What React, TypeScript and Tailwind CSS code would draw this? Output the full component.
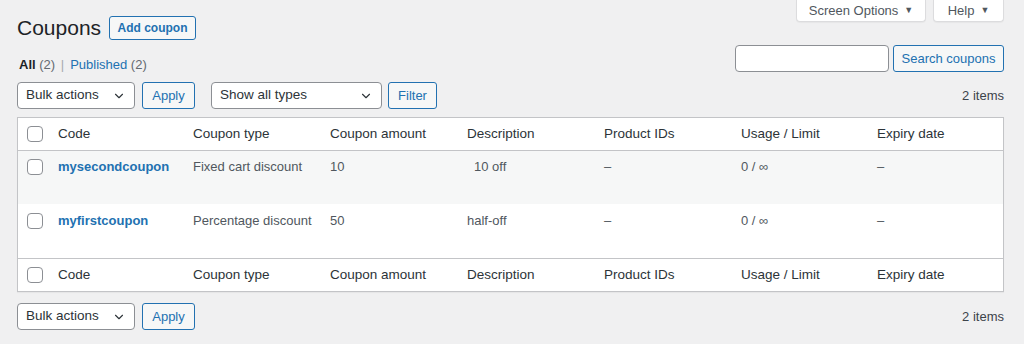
import React from "react";

const font = { fontFamily: "'Liberation Sans', Arial, sans-serif" };

function Chevron() {
  return (
    <svg width="14" height="14" viewBox="0 0 20 20" className="shrink-0">
      <path d="M5 7.5l5 5 5-5" fill="none" stroke="#2c3338" strokeWidth="1.6" strokeLinecap="round" strokeLinejoin="round" />
    </svg>
  );
}

function Select({ label, w }: { label: string; w: string }) {
  return (
    <div className={`${w} h-[27px] bg-white border border-[#8c8f94] rounded-[4px] flex items-center justify-between pl-[8px] pr-[8px] text-[13.5px] text-[#2c3338]`}>
      <span>{label}</span>
      <Chevron />
    </div>
  );
}

function Btn({ label, w }: { label: string; w: string }) {
  return (
    <div className={`${w} h-[27px] bg-[#f6f7f7] border border-[#2271b1] rounded-[3px] flex items-center justify-center text-[13px] text-[#2271b1]`}>
      {label}
    </div>
  );
}

function Check() {
  return <div className="w-[16px] h-[16px] bg-white border border-[#8c8f94] rounded-[4px]" />;
}

const cols = "grid grid-cols-[40px_135px_137px_137px_137px_137px_136px_1fr]";

function HeadRow({ top }: { top?: boolean }) {
  const labels = ["Code", "Coupon type", "Coupon amount", "Description", "Product IDs", "Usage / Limit", "Expiry date"];
  return (
    <div className={`${cols} h-[33px] items-center text-[13.5px] text-[#2c3338] ${top ? "border-b border-[#c3c4c7]" : "border-t border-[#c3c4c7]"}`}>
      <div className="pl-[9px]"><Check /></div>
      {labels.map((l) => (
        <div key={l}>{l}</div>
      ))}
    </div>
  );
}

function DataRow({ code, type, amount, desc, descPad, h, bg, pt }: { code: string; type: string; amount: string; desc: string; descPad: string; h: string; bg: string; pt: string }) {
  return (
    <div className={`${cols} ${h} ${bg} ${pt} items-start text-[13px] leading-[18px] text-[#50575e]`}>
      <div className="pl-[9px] pt-[1px]"><Check /></div>
      <div className="text-[#2271b1] font-bold text-[13px]">{code}</div>
      <div>{type}</div>
      <div>{amount}</div>
      <div className={descPad}>{desc}</div>
      <div>–</div>
      <div>0 / ∞</div>
      <div>–</div>
    </div>
  );
}

export default function App() {
  return (
    <div className="w-[1024px] h-[344px] bg-[#f0f0f1] pl-[17px] pr-[20px] overflow-hidden" style={font}>
      <div className="flex justify-between h-[40px]">
        <div className="flex items-center pt-[16px] gap-[9px]">
          <div className="text-[21px] leading-[24px] text-[#1d2327] -mt-[1px] w-[83px]">Coupons</div>
          <div className="h-[24px] w-[87px] bg-[#f6f7f7] border border-[#2271b1] rounded-[3px] flex items-center justify-center text-[12px] font-bold text-[#2271b1]">Add coupon</div>
        </div>
        <div className="flex gap-[7px] items-start">
          <div className="w-[130px] h-[22px] bg-white border border-t-0 border-[#dcdcde] rounded-b-[4px] flex items-center justify-center gap-[6px] text-[13px] text-[#50575e] shadow-[0_1px_1px_rgba(0,0,0,0.04)]">
            Screen Options <span className="text-[9px]">▼</span>
          </div>
          <div className="w-[71px] h-[22px] bg-white border border-t-0 border-[#dcdcde] rounded-b-[4px] flex items-center justify-center gap-[6px] text-[13px] text-[#50575e] shadow-[0_1px_1px_rgba(0,0,0,0.04)]">
            Help <span className="text-[9px]">▼</span>
          </div>
        </div>
      </div>

      <div className="flex justify-between items-end mt-[5px] h-[27px]">
        <div className="text-[13px] leading-[18px] text-[#646970] pl-[2px] mb-[-2px]">
          <span className="font-bold text-[#1d2327]">All</span> (2) <span className="ml-[2px] mr-[6px] text-[#a7aaad]">|</span>
          <span className="text-[#2271b1]">Published</span> (2)
        </div>
        <div className="flex gap-[4px]">
          <div className="w-[154px] h-[27px] bg-white border border-[#8c8f94] rounded-[4px]" />
          <Btn label="Search coupons" w="w-[111px]" />
        </div>
      </div>

      <div className="flex justify-between items-center mt-[10px] h-[27px]">
        <div className="flex items-center">
          <Select label="Bulk actions" w="w-[118px]" />
          <div className="ml-[7px]"><Btn label="Apply" w="w-[53px]" /></div>
          <div className="ml-[16px]"><Select label="Show all types" w="w-[171px]" /></div>
          <div className="ml-[6px]"><Btn label="Filter" w="w-[49px]" /></div>
        </div>
        <div className="text-[13px] text-[#3c434a]">2 items</div>
      </div>

      <div className="mt-[8px] bg-white border border-[#c3c4c7] shadow-[0_1px_1px_rgba(0,0,0,0.04)]">
        <HeadRow top />
        <DataRow code="mysecondcoupon" type="Fixed cart discount" amount="10" desc="10 off" descPad="pl-[7px]" h="h-[53px]" bg="bg-[#f6f7f7]" pt="pt-[7px]" />
        <DataRow code="myfirstcoupon" type="Percentage discount" amount="50" desc="half-off" descPad="" h="h-[54px]" bg="bg-white" pt="pt-[8px]" />
        <HeadRow />
      </div>

      <div className="flex justify-between items-center mt-[11px] h-[27px]">
        <div className="flex items-center">
          <Select label="Bulk actions" w="w-[118px]" />
          <div className="ml-[7px]"><Btn label="Apply" w="w-[53px]" /></div>
        </div>
        <div className="text-[13px] text-[#3c434a]">2 items</div>
      </div>
    </div>
  );
}
